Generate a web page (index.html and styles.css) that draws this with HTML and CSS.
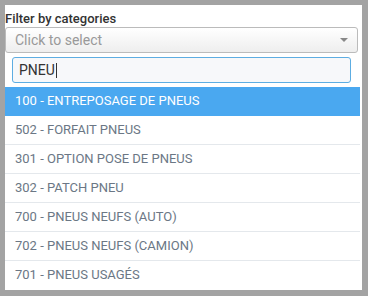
FILE: index.html
```html
<!DOCTYPE html>
<html lang="en">
<head>
    <meta charset="UTF-8">
    <title>Filter by categories</title>
    <link rel="stylesheet" href="styles.css">
</head>
<body>
    <div class="panel">
        <label class="label">Filter by categories</label>
        <div class="select">
            <span class="placeholder">Click to select</span>
            <span class="arrow"></span>
        </div>
        <div class="drop">
            <div class="search">
                <span class="query">PNEU</span><span class="caret"></span>
            </div>
            <ul class="results">
                <li class="active">100 - ENTREPOSAGE DE PNEUS</li>
                <li>502 - FORFAIT PNEUS</li>
                <li>301 - OPTION POSE DE PNEUS</li>
                <li>302 - PATCH PNEU</li>
                <li>700 - PNEUS NEUFS (AUTO)</li>
                <li>702 - PNEUS NEUFS (CAMION)</li>
                <li>701 - PNEUS USAGÉS</li>
            </ul>
        </div>
    </div>
</body>
</html>
```
FILE: styles.css
```css
html, body {
    margin: 0;
    padding: 0;
}

body {
    background-color: #a3a3a3;
    padding: 5px 5px 5px 5px;
    font-family: Roboto, "Liberation Sans", sans-serif;
    height: 296px;
    box-sizing: border-box;
}

.panel {
    background-color: #fff;
    height: 285px;
    width: 357px;
    display: flex;
    flex-direction: column;
}

.label {
    font-size: 13px;
    font-weight: 500;
    color: #333;
    line-height: 16px;
    padding-top: 6px;
    height: 16px;
}

.select {
    height: 24px;
    border: 1px solid #bbb;
    border-radius: 3px;
    background: linear-gradient(#fff, #eee);
    display: flex;
    align-items: center;
    justify-content: space-between;
    padding: 0 9px 0 9px;
    margin-right: 4px;
}

.placeholder {
    color: #999;
    font-size: 14px;
}

.arrow {
    width: 0;
    height: 0;
    border-left: 4px solid transparent;
    border-right: 4px solid transparent;
    border-top: 4px solid #888;
}

.drop {
    width: 355px;
    display: flex;
    flex-direction: column;
}

.search {
    margin: 4px 9px 4px 7px;
    height: 24px;
    border: 1px solid #5dade2;
    border-radius: 3px;
    background-color: #f7f8fa;
    display: flex;
    align-items: center;
    padding-left: 6px;
}

.query {
    font-size: 14px;
    color: #333;
}

.caret {
    width: 1px;
    height: 15px;
    background-color: #333;
    margin-left: 1px;
}

.results {
    list-style: none;
    margin: 0;
    padding: 0;
}

.results li {
    height: 28px;
    line-height: 28px;
    border-bottom: 1px solid #e4e8ec;
    padding-left: 10px;
    font-size: 13px;
    color: #6b7785;
}

.results li:last-child {
    border-bottom: none;
}

.results li.active {
    background-color: #4aa8f0;
    color: #fff;
    border-bottom: none;
    height: 29px;
}
```
